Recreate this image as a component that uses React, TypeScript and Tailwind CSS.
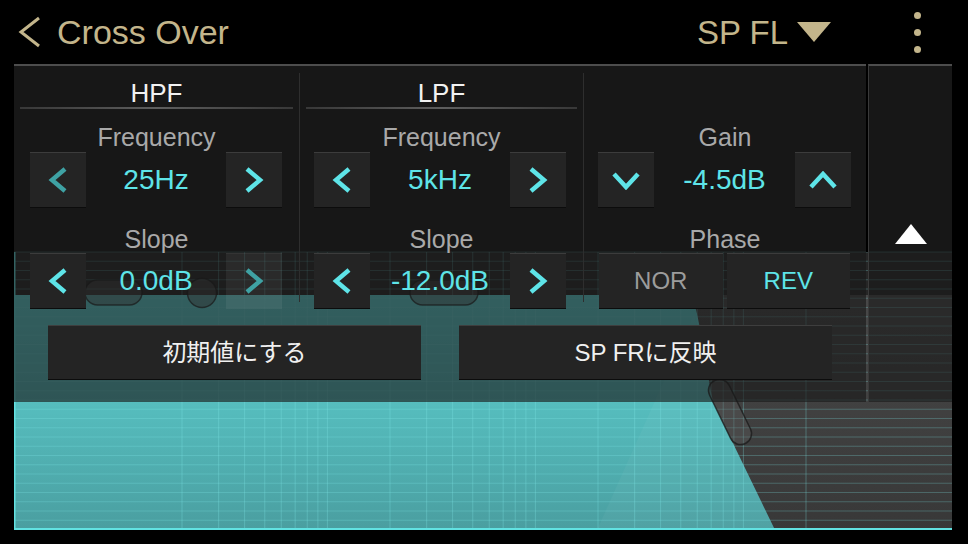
import React from 'react';

const GOLD = '#c3b58b';
const CYAN = '#5ee4e8';

// graph geometry, in container coords (screen - 14, - 64)
const GW = 938;
const GH = 466;
const GT = 188;
const hLines = Array.from({ length: 31 }, (_, i) => GT + i * 9.25);
const freqs = [
  20, 30, 40, 50, 60, 70, 80, 90, 100, 200, 300, 400, 500, 600, 700, 800, 900, 1000, 2000, 3000, 4000, 5000,
  6000, 7000, 8000, 9000, 10000, 20000,
];
const fx = (f: number) => 168 + 208 * Math.log10(f / 20);

function Graph() {
  return (
    <svg className="absolute inset-0" width={GW} height={GH} viewBox={`0 0 ${GW} ${GH}`}>
      <defs>
        <linearGradient id="teal" x1="0" y1="0" x2="0" y2="1">
          <stop offset="0" stopColor="#60d8d8" />
          <stop offset="1" stopColor="#4a9ea0" />
        </linearGradient>
        <linearGradient id="gray" x1="0" y1="0" x2="0" y2="1">
          <stop offset="0" stopColor="#484848" />
          <stop offset="1" stopColor="#383838" />
        </linearGradient>
      </defs>
      <rect x="0" y="0" width={GW} height={GT} fill="#171717" />
      <rect x="0" y={GT} width={GW} height={43} fill="#262626" />
      <rect x="0" y={231} width={GW} height={GH - 231} fill="url(#gray)" />
      <path d="M0,231 L674,231 C683,231 687,276 699,338 L761,466 L0,466 Z" fill="url(#teal)" />
      <path d="M583,466 L680,250 L699,338 L761,466 Z" fill="#ffffff" opacity="0.035" />
      {hLines.map((y) => (
        <line key={y} x1="0" x2={GW} y1={y} y2={y} stroke="#80e8e8" strokeOpacity="0.26" strokeWidth="1" />
      ))}
      {freqs.map((f) => (
        <line key={f} x1={fx(f)} x2={fx(f)} y1={GT} y2={GH} stroke="#80e8e8" strokeOpacity="0.3" strokeWidth="1" />
      ))}
      <line x1="0.75" x2="0.75" y1={GT} y2={GH} stroke="#62e2e2" strokeWidth="1.5" />
      <line x1="0" x2={GW} y1={GH - 1} y2={GH - 1} stroke="#62e2e2" strokeWidth="2" />
      {/* handles */}
      <rect x="71" y="216" width="57" height="25" rx="12.5" fill="#5a5a5a" fillOpacity="0.45" stroke="#1a1a1a" strokeOpacity="0.7" strokeWidth="1.5" />
      <circle cx="188" cy="229" r="14.5" fill="#5a5a5a" fillOpacity="0.45" stroke="#1a1a1a" strokeOpacity="0.7" strokeWidth="1.5" />
      <rect x="396" y="216" width="68" height="25" rx="12.5" fill="#5a5a5a" fillOpacity="0.45" stroke="#1a1a1a" strokeOpacity="0.7" strokeWidth="1.5" />
      <rect
        x="705"
        y="313"
        width="22"
        height="70"
        rx="11"
        transform="rotate(-26 716 348)"
        fill="#5a5a5a"
        fillOpacity="0.4"
        stroke="#1a1a1a"
        strokeOpacity="0.75"
        strokeWidth="1.5"
      />
    </svg>
  );
}

type Dir = 'left' | 'right' | 'up' | 'down';

function Chevron({ dir, dim }: { dir: Dir; dim?: boolean }) {
  const color = dim ? '#3fa2a4' : CYAN;
  if (dir === 'left' || dir === 'right') {
    return (
      <svg width="20" height="26" viewBox="0 0 20 26">
        <polyline
          points={dir === 'left' ? '17,2 4,13 17,24' : '3,2 16,13 3,24'}
          fill="none"
          stroke={color}
          strokeWidth="4.5"
        />
      </svg>
    );
  }
  return (
    <svg width="28" height="19" viewBox="0 0 28 19">
      <polyline
        points={dir === 'down' ? '2,3 14,16 26,3' : '2,16 14,3 26,16'}
        fill="none"
        stroke={color}
        strokeWidth="4.5"
      />
    </svg>
  );
}

function StepButton({ dir, dim, ghost }: { dir: Dir; dim?: boolean; ghost?: boolean }) {
  return (
    <button
      className={`w-[56px] h-[56px] shrink-0 flex items-center justify-center border-t border-b ${
        ghost ? 'bg-[rgba(255,255,255,0.06)] border-t-[rgba(255,255,255,0.05)] border-b-transparent' : 'bg-[#242424] border-t-[#3c3c3c] border-b-[#0c0c0c]'
      }`}
    >
      <Chevron dir={dir} dim={dim} />
    </button>
  );
}

function Stepper({
  value,
  left,
  right,
  pl,
  pr,
}: {
  value: string;
  left: { dir: Dir; dim?: boolean; ghost?: boolean };
  right: { dir: Dir; dim?: boolean; ghost?: boolean };
  pl: string;
  pr: string;
}) {
  return (
    <div className={`self-stretch h-[56px] flex items-center ${pl} ${pr}`}>
      <StepButton {...left} />
      <div className="flex-1 text-center text-[28px] leading-none" style={{ color: CYAN }}>
        {value}
      </div>
      <StepButton {...right} />
    </div>
  );
}

function Title({ text }: { text?: string }) {
  return (
    <>
      <div className="h-[26px] leading-[26px] text-[26px] text-[#f2f2f2]">{text ?? '\u00a0'}</div>
      <div
        className={`mt-[1px] h-[2px] self-stretch mx-[6px] ${
          text ? 'bg-gradient-to-r from-[#383838] via-[#5e5e5e] to-[#383838]' : ''
        }`}
      />
    </>
  );
}

function Label({ text, className }: { text: string; className: string }) {
  return <div className={`h-[26px] leading-[26px] text-[25px] text-[#a9a9a9] ${className}`}>{text}</div>;
}

function Divider() {
  return <div className="w-px mt-[7px] h-[229px] bg-[#2e2e2e] shrink-0" />;
}

function WideButton({ children }: { children: React.ReactNode }) {
  return (
    <button className="flex-1 h-[55px] bg-[#242424] border-t border-[#3e3e3e] border-b border-b-[#0c0c0c] text-[24px] text-[#f0f0f0] flex items-center justify-center">
      {children}
    </button>
  );
}

export default function App() {
  return (
    <div className="w-[968px] h-[544px] bg-black overflow-hidden font-['Liberation_Sans','Noto_Sans_CJK_JP',sans-serif]">
      {/* header */}
      <div className="h-[64px] flex items-center pl-[17px] pr-[47px]">
        <svg width="24" height="32" viewBox="0 0 24 32">
          <polyline points="22,2 4,16 22,30" fill="none" stroke={GOLD} strokeWidth="3" />
        </svg>
        <span className="ml-[16px] text-[34px] leading-none" style={{ color: GOLD }}>
          Cross Over
        </span>
        <span className="ml-auto text-[33px] leading-none" style={{ color: GOLD }}>
          SP FL
        </span>
        <svg className="ml-[9px]" width="34" height="20" viewBox="0 0 34 20">
          <polygon points="0,0 34,0 17,20" fill={GOLD} />
        </svg>
        <div className="ml-[83px] flex flex-col gap-[10px]">
          <div className="w-[7px] h-[7px] rounded-full" style={{ background: GOLD }} />
          <div className="w-[7px] h-[7px] rounded-full" style={{ background: GOLD }} />
          <div className="w-[7px] h-[7px] rounded-full" style={{ background: GOLD }} />
        </div>
      </div>

      {/* panel + graph */}
      <div className="relative ml-[14px] w-[938px] h-[466px]">
        <Graph />
        <div className="relative flex h-[338px]">
          <div className="w-[852px] flex flex-col border-t-2 border-[#4d4d4d] bg-[rgba(23,23,23,0.63)]">
            <div className="flex">
              {/* HPF */}
              <div className="w-[285px] flex flex-col items-center pt-[14px]">
                <Title text="HPF" />
                <Label text="Frequency" className="mt-[15px]" />
                <div className="mt-[2px] self-stretch">
                  <Stepper
                    value="25Hz"
                    left={{ dir: 'left', dim: true }}
                    right={{ dir: 'right' }}
                    pl="pl-[16px]"
                    pr="pr-[17px]"
                  />
                </div>
                <Label text="Slope" className="mt-[18px]" />
                <div className="mt-[1px] self-stretch">
                  <Stepper
                    value="0.0dB"
                    left={{ dir: 'left' }}
                    right={{ dir: 'right', dim: true, ghost: true }}
                    pl="pl-[16px]"
                    pr="pr-[17px]"
                  />
                </div>
              </div>
              <Divider />
              {/* LPF */}
              <div className="w-[283px] flex flex-col items-center pt-[14px]">
                <Title text="LPF" />
                <Label text="Frequency" className="mt-[15px]" />
                <div className="mt-[2px] self-stretch">
                  <Stepper value="5kHz" left={{ dir: 'left' }} right={{ dir: 'right' }} pl="pl-[14px]" pr="pr-[17px]" />
                </div>
                <Label text="Slope" className="mt-[18px]" />
                <div className="mt-[1px] self-stretch">
                  <Stepper
                    value="-12.0dB"
                    left={{ dir: 'left' }}
                    right={{ dir: 'right' }}
                    pl="pl-[14px]"
                    pr="pr-[17px]"
                  />
                </div>
              </div>
              <Divider />
              {/* Gain / Phase */}
              <div className="w-[282px] flex flex-col items-center pt-[14px]">
                <Title />
                <Label text="Gain" className="mt-[15px]" />
                <div className="mt-[2px] self-stretch">
                  <Stepper value="-4.5dB" left={{ dir: 'down' }} right={{ dir: 'up' }} pl="pl-[14px]" pr="pr-[15px]" />
                </div>
                <Label text="Phase" className="mt-[18px]" />
                <div className="mt-[1px] self-stretch h-[56px] flex gap-[4px] pl-[15px] pr-[16px]">
                  <button className="flex-1 bg-[#242424] border-t border-[#3c3c3c] border-b border-b-[#0c0c0c] text-[24px] text-[#9c9c9c]">
                    NOR
                  </button>
                  <button
                    className="flex-1 bg-[#242424] border-t border-[#3c3c3c] border-b border-b-[#0c0c0c] text-[24px]"
                    style={{ color: CYAN }}
                  >
                    REV
                  </button>
                </div>
              </div>
            </div>
            <div className="mt-[16px] flex gap-[38px] px-[34px]">
              <WideButton>初期値にする</WideButton>
              <WideButton>SP FRに反映</WideButton>
            </div>
          </div>
          <div className="w-[2px] flex flex-col">
            <div className="h-[188px] bg-black" />
          </div>
          <div className="flex-1 flex flex-col items-center border-t-2 border-[#4d4d4d] border-l border-l-[#3a3a3a] bg-[rgba(23,23,23,0.6)]">
            <svg className="mt-[158px]" width="32" height="20" viewBox="0 0 32 20">
              <polygon points="16,0 32,20 0,20" fill="#ffffff" />
            </svg>
          </div>
        </div>
      </div>
    </div>
  );
}
